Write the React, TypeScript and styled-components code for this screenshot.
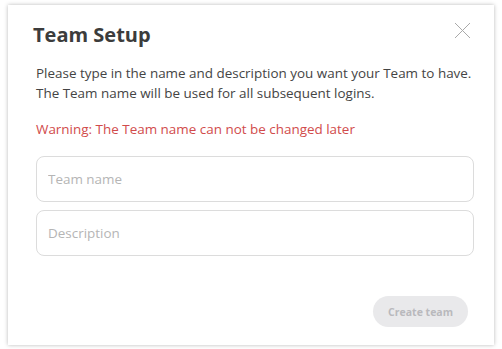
import React from 'react';
import styled, { createGlobalStyle } from 'styled-components';

const GlobalStyle = createGlobalStyle`
  html, body {
    margin: 0;
    padding: 0;
    background: #ffffff;
    font-family: "Open Sans", "Noto Sans", sans-serif;
  }
`;

const Page = styled.div`
  padding: 5px 8px 4px 8px;
  box-sizing: border-box;
  width: 502px;
  height: 349px;
`;

const Dialog = styled.div`
  position: relative;
  width: 486px;
  height: 340px;
  background: #ffffff;
  box-shadow: 0 0 4px rgba(0, 0, 0, 0.28);
  display: flex;
  flex-direction: column;
  box-sizing: border-box;
  padding: 16px 20px 18px 28px;
`;

const Title = styled.h2`
  margin: 0 0 0 -3px;
  font-size: 20px;
  line-height: 28px;
  font-weight: 700;
  color: #3c3c3c;
`;

const CloseButton = styled.button`
  position: absolute;
  top: 16px;
  right: 23px;
  width: 18px;
  height: 18px;
  padding: 0;
  border: none;
  background: none;
  cursor: pointer;
  display: flex;
  align-items: center;
  justify-content: center;
`;

const Intro = styled.p`
  margin: 14px 0 0;
  font-size: 13.45px;
  line-height: 20px;
  color: #444444;
`;

const Warning = styled.p`
  margin: 16px 0 0;
  font-size: 13.45px;
  line-height: 20px;
  color: #d14b4b;
`;

const Fields = styled.div`
  margin-top: 17px;
  display: flex;
  flex-direction: column;
  gap: 8px;
`;

const Field = styled.input`
  box-sizing: border-box;
  width: 100%;
  height: 46px;
  border: 1px solid #dcdcdc;
  border-radius: 8px;
  padding: 0 11px;
  font-family: inherit;
  font-size: 13.45px;
  color: #444444;
  outline: none;

  &::placeholder {
    color: #b5b5b5;
  }
`;

const Footer = styled.div`
  margin-top: auto;
  display: flex;
  justify-content: flex-end;
  padding-right: 6px;
`;

const CreateButton = styled.button`
  height: 31px;
  padding: 0 15px;
  border: none;
  border-radius: 16px;
  background: #e9e9eb;
  color: #b9b9bd;
  font-family: inherit;
  font-size: 10.5px;
  font-weight: 700;
  cursor: not-allowed;
`;

const App = () => {
  return (
    <>
      <GlobalStyle />
      <Page>
        <Dialog>
          <Title>Team Setup</Title>
          <CloseButton aria-label="Close">
            <svg width="17" height="17" viewBox="0 0 17 17">
              <path d="M1 1L16 16M16 1L1 16" stroke="#a9a9a9" strokeWidth="1" fill="none" />
            </svg>
          </CloseButton>
          <Intro>
            Please type in the name and description you want your Team to have.
            <br />
            The Team name will be used for all subsequent logins.
          </Intro>
          <Warning>Warning: The Team name can not be changed later</Warning>
          <Fields>
            <Field placeholder="Team name" />
            <Field placeholder="Description" />
          </Fields>
          <Footer>
            <CreateButton disabled>Create team</CreateButton>
          </Footer>
        </Dialog>
      </Page>
    </>
  );
};

export default App;
